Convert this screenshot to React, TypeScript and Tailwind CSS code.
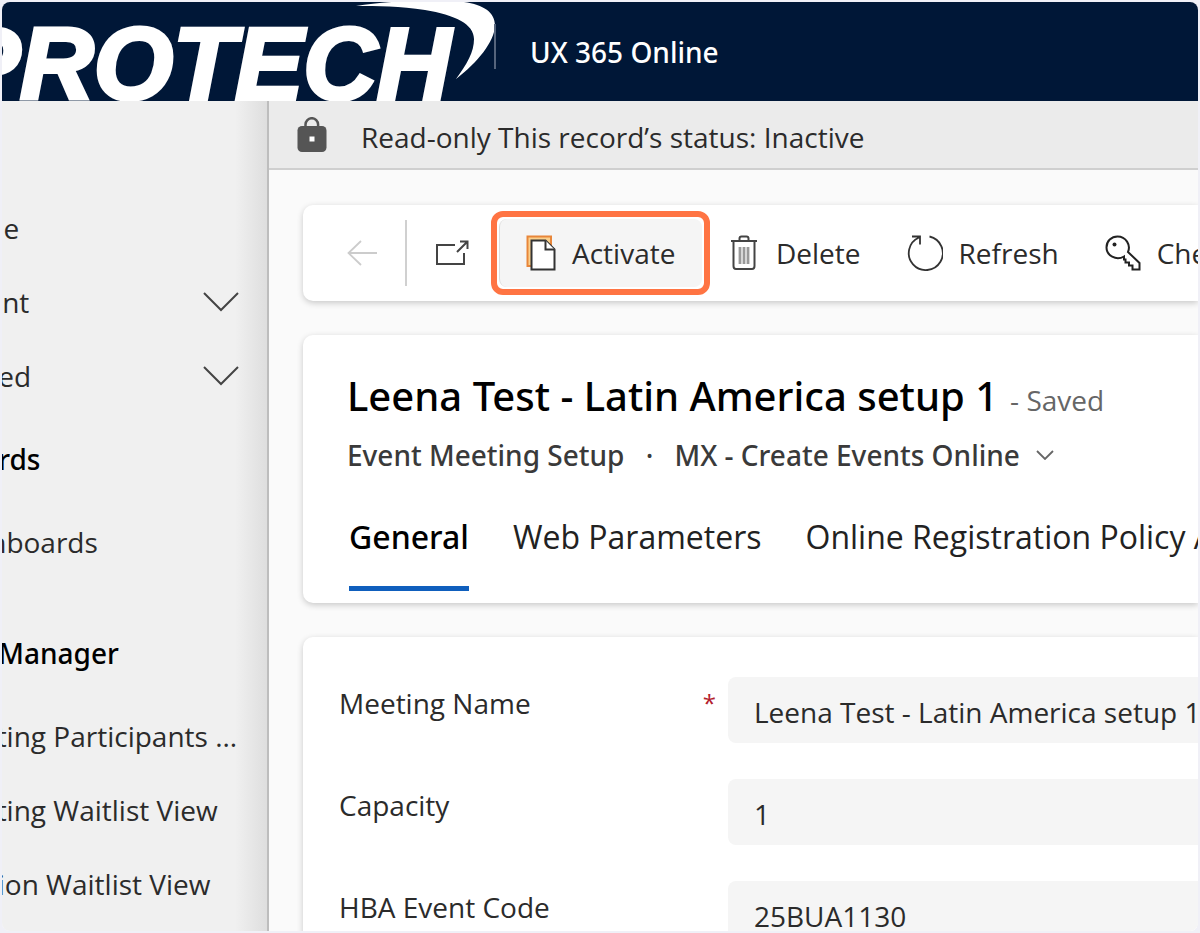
import type { ReactNode } from 'react';
import clsx from 'clsx';

interface NavItem {
  label: string;
  heading?: boolean;
  expandable?: boolean;
  height: string;
}

const NAV: NavItem[] = [
  { label: 'Home', height: 'h-[74px]' },
  { label: 'Recent', expandable: true, height: 'h-[74px]' },
  { label: 'Pinned', expandable: true, height: 'h-[74px]' },
  { label: 'Dashboards', heading: true, height: 'h-[92px]' },
  { label: 'Dashboards', height: 'h-[74px]' },
  { label: 'Meeting Manager', heading: true, height: 'mt-7 h-[92px]' },
  { label: 'Meeting Participants ...', height: 'h-[74px]' },
  { label: 'Meeting Waitlist View', height: 'h-[74px]' },
  { label: 'Session Waitlist View', height: 'h-[74px]' },
];

const TABS = ['General', 'Web Parameters', 'Online Registration Policy Acceptance'];

const FIELDS = [
  { id: 'meeting-name', label: 'Meeting Name', value: 'Leena Test - Latin America setup 1', required: true },
  { id: 'capacity', label: 'Capacity', value: '1', required: false },
  { id: 'event-code', label: 'HBA Event Code', value: '25BUA1130', required: false },
];

function Logo() {
  return (
    <svg width="496" height="99" viewBox="2 2 496 99" className="shrink-0" aria-label="Protech">
      <text
        x="-48"
        y="99"
        fill="#fff"
        stroke="#fff"
        strokeWidth="4"
        fontFamily="Liberation Sans, Arial, sans-serif"
        fontWeight="700"
        fontStyle="italic"
        fontSize="102"
      >
        PROTECH
      </text>
      <path d="M356 6C385 1 425 0 455 1C480 3 495 10 495 26C494 42 478 62 456 79C467 64 474 52 474 39C474 24 455 15 425 10C400 6 378 6 356 6Z" fill="#fff" />
      <path d="M495 24V69" stroke="#55647c" strokeWidth="2" />
    </svg>
  );
}

function Chevron() {
  return (
    <svg width="36" height="20" viewBox="0 0 36 20" fill="none" stroke="#444" strokeWidth="2">
      <path d="M1 1L18 18L35 1" />
    </svg>
  );
}

function LockIcon() {
  return (
    <svg width="30" height="36" viewBox="0 0 30 36">
      <path d="M8.500 12V7.500a6.300 6.300 0 0 1 12.600 0V12" fill="none" stroke="#555" strokeWidth="2.500" />
      <rect x="0.500" y="9" width="29" height="26" rx="4.500" fill="#555" />
      <rect x="12.500" y="19.500" width="5" height="5" fill="#fff" />
    </svg>
  );
}

function BackIcon() {
  return (
    <svg width="30" height="26" viewBox="0 0 30 26" fill="none" stroke="#ccc" strokeWidth="1.800">
      <path d="M30 13H1.500M14 1L1.500 13L14 25" />
    </svg>
  );
}

function PopOutIcon() {
  return (
    <svg width="34" height="26" viewBox="0 0 34 26" fill="none" stroke="#444" strokeWidth="2">
      <path d="M20 5H2V24H29V13M22 12L32 2M25 1.500H32.500V9" />
    </svg>
  );
}

function ActivateIcon() {
  return (
    <svg width="30" height="36" viewBox="0 0 30 36">
      <path d="M1.500 31V1.500H25V31Z" fill="#fbd08c" stroke="#e8863a" strokeWidth="2" />
      <path d="M5.500 5.500H19.500L28.500 14.500V34.500H5.500Z" fill="#fff" stroke="#333" strokeWidth="2" />
      <path d="M19.500 5.500V14.500H28.500" fill="#fff" stroke="#333" strokeWidth="2" />
    </svg>
  );
}

function DeleteIcon() {
  return (
    <svg width="30" height="36" viewBox="-1 0 30 36" fill="none" stroke="#444">
      <path d="M0 6H26M8.500 5V3.500Q8.500 1.500 10.500 1.500H15.500Q17.500 1.500 17.500 3.500V5" strokeWidth="2" />
      <path d="M2.500 6V31Q2.500 34 5 34H21Q23.500 34 23.500 31V6" strokeWidth="2" />
      <path d="M9 12V29M13 12V29M17 12V29" stroke="#999" strokeWidth="2.800" />
    </svg>
  );
}

function RefreshIcon() {
  return (
    <svg width="36" height="36" viewBox="0 0 36 36" fill="none" stroke="#333" strokeWidth="1.800">
      <path d="M22.500 1.500A17 17 0 1 1 12 2.500M5 1.500H13V9.500" />
    </svg>
  );
}

function KeyIcon() {
  return (
    <svg width="36" height="36" viewBox="0 0 36 36" fill="none" stroke="#222" strokeWidth="2">
      <path d="M23 17L34.500 28V34.500H27.500V30.500H24V27.500H20.500V24.500H19V21.500C11 26 1.500 20.500 1.500 12.500C1.500 6 6.500 1.500 12.500 1.500C21 1.500 26 10 23 17Z" />
      <circle cx="9.500" cy="9.500" r="2" fill="#222" strokeWidth="0" />
    </svg>
  );
}

function Command({ icon, children }: { icon: ReactNode; children: ReactNode }) {
  return (
    <button type="button" className="flex h-[68px] shrink-0 items-center gap-4 whitespace-nowrap">
      {icon}
      {children}
    </button>
  );
}

function CommandBar() {
  return (
    <div className="flex h-24 items-center overflow-hidden rounded-l-[10px] bg-white pl-11 text-[28px] shadow-[0_2px_6px_rgba(0,0,0,0.2)]">
      <button type="button" aria-label="Back" className="mr-7 shrink-0"><BackIcon /></button>
      <span className="h-[66px] w-[2px] shrink-0 bg-[#d0d0d0]" />
      <button type="button" aria-label="Open in new window" className="mr-[30px] ml-7 shrink-0"><PopOutIcon /></button>
      <div className="relative mr-7 shrink-0">
        <button type="button" className="flex h-[68px] w-[203px] items-center gap-4 rounded-lg border-l border-[#ddd] bg-[#f5f5f5] pl-[26px]">
          <ActivateIcon />
          Activate
        </button>
        <div className="pointer-events-none absolute -inset-2 rounded-xl border-6 border-[#ff7443]" />
      </div>
      <div className="flex gap-[46px]">
        <Command icon={<DeleteIcon />}>Delete</Command>
        <Command icon={<RefreshIcon />}>Refresh</Command>
        <Command icon={<KeyIcon />}>Check Access</Command>
      </div>
    </div>
  );
}

function RecordHeader() {
  return (
    <div className="h-[268px] overflow-hidden rounded-l-[10px] bg-white pt-[34px] pl-11 whitespace-nowrap shadow-[0_2px_6px_rgba(0,0,0,0.2)]">
      <div className="flex items-baseline gap-3">
        <h1 className="font-['Noto_Sans',sans-serif] text-[40px] leading-[54px] font-medium text-black">Leena Test - Latin America setup 1</h1>
        <span className="text-[28px] text-[#666]">- Saved</span>
      </div>
      <div className="flex h-16 items-center font-['Noto_Sans',sans-serif] text-[28px] font-medium text-[#3a3a3a]">
        <span>Event Meeting Setup</span>
        <span className="w-[50px] text-center">·</span>
        <button type="button" className="flex items-center gap-4">
          MX - Create Events Online
          <svg width="18" height="10" viewBox="0 0 18 10" fill="none" stroke="#666" strokeWidth="1.800">
            <path d="M1 1L9 9L17 1" />
          </svg>
        </button>
      </div>
      <div role="tablist" className="mt-4 flex gap-11 pl-[2px] text-[32px] text-[#222]">
        {TABS.map((tab, i) => (
          <button
            key={tab}
            type="button"
            role="tab"
            aria-selected={i === 0}
            className={clsx(
              'h-[88px] shrink-0 border-b-5 pb-4',
              i === 0 ? "border-[#0f5fbd] font-['Noto_Sans',sans-serif] font-medium text-black" : 'border-transparent'
            )}
          >
            {tab}
          </button>
        ))}
      </div>
    </div>
  );
}

function DetailsForm() {
  return (
    <form className="flex flex-1 flex-col gap-9 rounded-tl-[10px] bg-white pl-9 pt-10 text-[28px] shadow-[0_2px_6px_rgba(0,0,0,0.2)]">
      {FIELDS.map((f) => (
        <div key={f.id} className="flex h-[66px] shrink-0">
          <label htmlFor={f.id} className="flex h-[52px] w-[389px] shrink-0 items-center justify-between pr-3">
            {f.label}
            {f.required && <span className="text-2xl text-[#b3202c]">*</span>}
          </label>
          <input id={f.id} defaultValue={f.value} readOnly className="min-w-0 flex-1 rounded-l-lg bg-[#f5f5f5] pt-1 pl-[26px] outline-none" />
        </div>
      ))}
    </form>
  );
}

export default function App() {
  return (
    <div className="h-screen bg-[#f0f0f7] p-[2px] font-['Open_Sans',sans-serif] text-[#2b2b2b]">
      <div className="flex h-full flex-col overflow-hidden rounded-lg bg-[#fafafa]">
        <header className="flex h-[99px] shrink-0 items-center bg-[#001737]">
          <Logo />
          <span className="ml-8 font-['Noto_Sans',sans-serif] text-[28px] font-medium whitespace-nowrap text-white">UX 365 Online</span>
        </header>
        <div className="flex min-h-0 flex-1">
          <nav className="w-[265px] shrink-0 overflow-hidden bg-linear-to-r from-[#f0f0f0] from-88% to-[#dedede] pt-[90px] text-[28px]">
            {NAV.map((item, i) => (
              <a
                key={i}
                href="#"
                className={clsx(
                  'flex items-center justify-between pr-7 whitespace-nowrap',
                  item.height,
                  item.heading ? "-ml-[122px] font-['Noto_Sans',sans-serif] font-medium text-black" : '-ml-[62px]'
                )}
              >
                {item.label}
                {item.expandable && <Chevron />}
              </a>
            ))}
          </nav>
          <main className="flex min-w-0 flex-1 flex-col border-l-2 border-[#bdbdbd]">
            <div className="flex h-[69px] shrink-0 items-center gap-[34px] border-b-2 border-[#cfcfcf] bg-[#ebebeb] pl-7 text-[28px] whitespace-nowrap">
              <LockIcon />
              <p className="pt-1">Read-only This record’s status: Inactive</p>
            </div>
            <div className="flex flex-1 flex-col gap-[34px] pt-[35px] pl-[34px]">
              <CommandBar />
              <RecordHeader />
              <DetailsForm />
            </div>
          </main>
        </div>
      </div>
    </div>
  );
}
